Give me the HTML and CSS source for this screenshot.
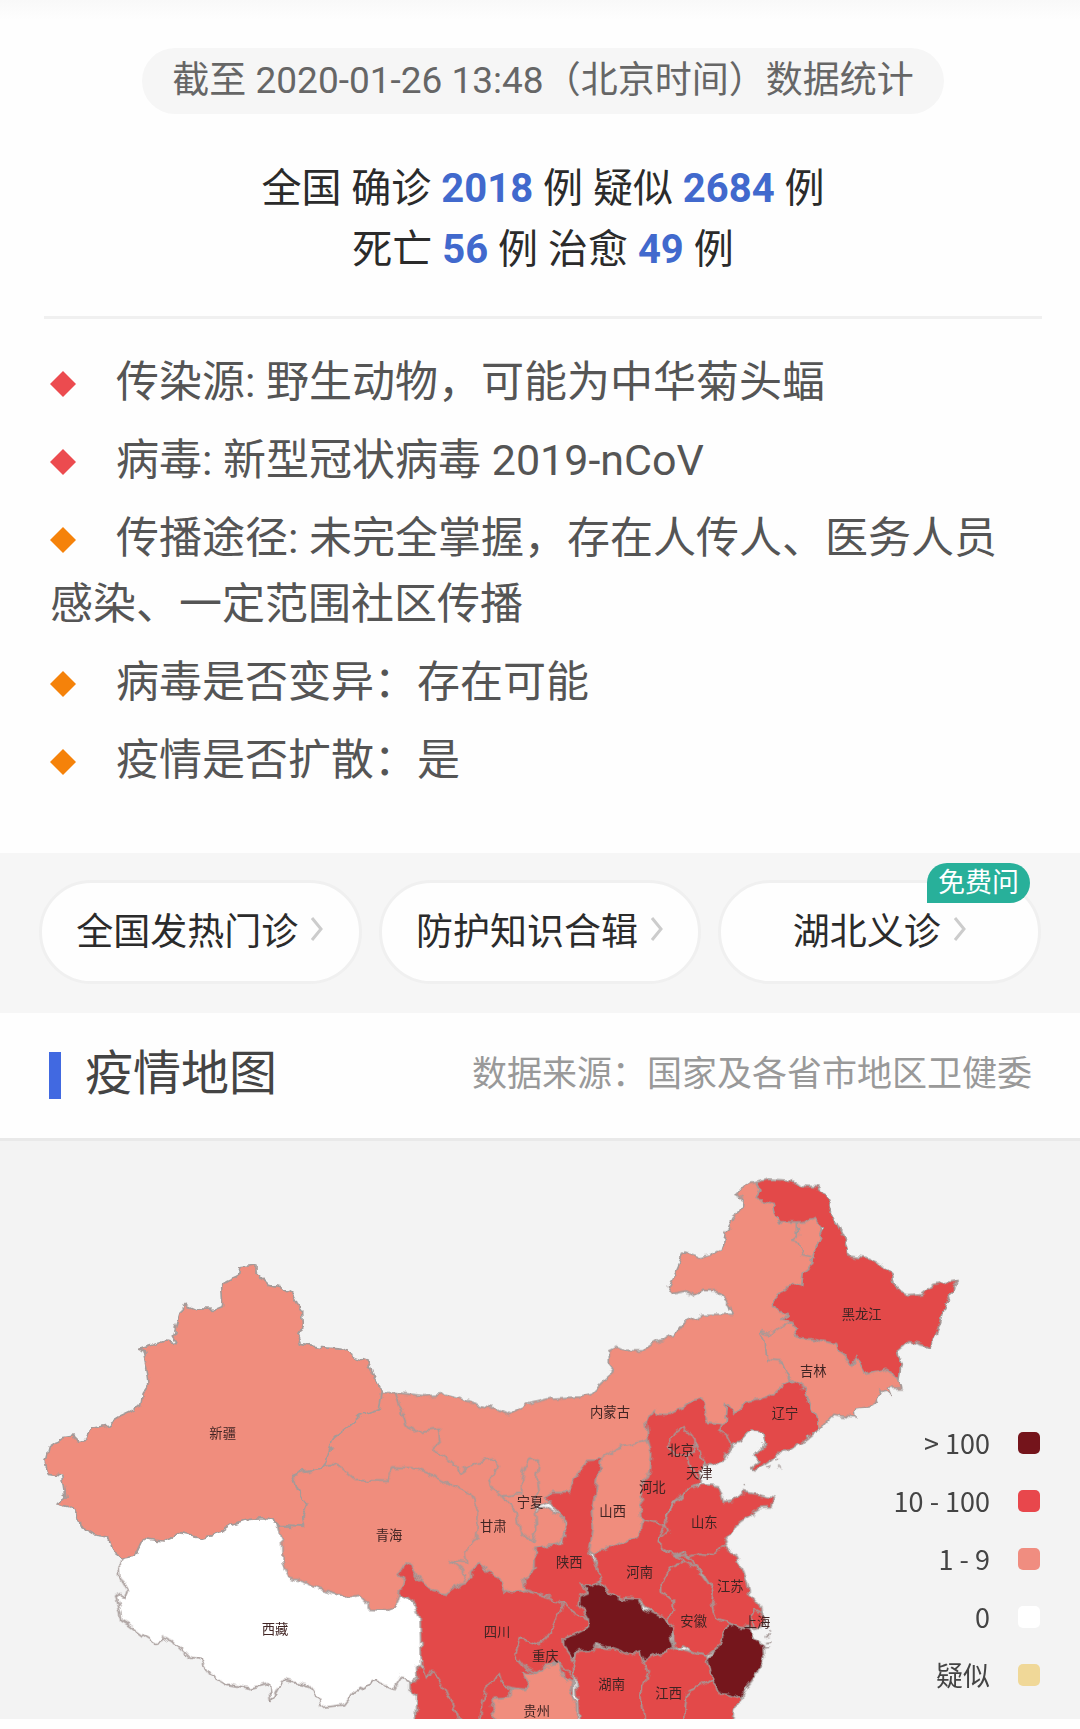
FILE: index.html
```
<!DOCTYPE html>
<html lang="zh-CN">
<head>
<meta charset="utf-8">
<meta name="viewport" content="width=device-width, initial-scale=1">
<title>疫情地图</title>
<link rel="stylesheet" href="styles.css">
</head>
<body>
<main>
  <section class="summary">
    <p class="stamp">截至 2020-01-26 13:48（北京时间）数据统计</p>
    <p class="stats">全国 确诊 <strong>2018</strong> 例 疑似 <strong>2684</strong> 例<br>死亡 <strong>56</strong> 例 治愈 <strong>49</strong> 例</p>
    <ul class="facts">
      <li class="fact fact-red">传染源: 野生动物，可能为中华菊头蝠</li>
      <li class="fact fact-red">病毒: 新型冠状病毒 2019-nCoV</li>
      <li class="fact">传播途径: 未完全掌握，存在人传人、医务人员感染、一定范围社区传播</li>
      <li class="fact">病毒是否变异：存在可能</li>
      <li class="fact">疫情是否扩散：是</li>
    </ul>
  </section>

  <nav class="links">
    <a class="pill" href="#clinics">全国发热门诊<svg class="chevron" viewBox="0 0 14 26" aria-hidden="true"><path d="M2 2l9 11-9 11"/></svg></a>
    <a class="pill" href="#guide">防护知识合辑<svg class="chevron" viewBox="0 0 14 26" aria-hidden="true"><path d="M2 2l9 11-9 11"/></svg></a>
    <a class="pill" href="#hubei">湖北义诊<svg class="chevron" viewBox="0 0 14 26" aria-hidden="true"><path d="M2 2l9 11-9 11"/></svg><span class="badge">免费问</span></a>
  </nav>

  <header class="heading">
    <h2 class="title">疫情地图</h2>
    <p class="source">数据来源：国家及各省市地区卫健委</p>
  </header>

  <section class="map">
    <svg class="china" viewBox="0 0 3240 1734" role="img" aria-label="全国疫情地图">
      <defs>
        <filter id="coast" filterUnits="userSpaceOnUse" x="0" y="0" width="3240" height="1740">
          <feTurbulence type="fractalNoise" baseFrequency="0.035" numOctaves="2" seed="4"/>
          <feDisplacementMap in="SourceGraphic" scale="26" xChannelSelector="R" yChannelSelector="G"/>
        </filter>
      </defs>
      <g class="regions" filter="url(#coast)">
        <!-- 西藏 -->
        <path class="none" transform="translate(60 300)" d="M345 900L310 952L300 965L302 1010L325 1050L315 1075L300 1055L287 1065L302 1110L305 1140L330 1155L370 1185L410 1210L425 1187L460 1200L510 1250L545 1260L570 1300L620 1330L690 1342L748 1328L755 1378L775 1340L795 1318L870 1335L895 1370L900 1400L970 1392L1000 1355L1065 1318L1120 1342L1145 1303L1175 1325L1210 1290L1220 1130L1140 1040L780 830L600 800Z"/>
        <!-- 内蒙古 -->
        <path class="low" transform="translate(1680 30)" d="M-495 725L-400 735L-340 730L-290 745L-240 765L-170 780L-150 790L-100 760L-30 742L60 738L90 730L125 695L162 662L145 640L145 600L170 588L210 600L245 600L290 570L345 550L375 512L410 500L430 490L520 490L510 460L470 420L425 418L405 432L380 420L340 428L325 405L345 370L375 303L420 318L450 312L490 290L495 250L520 200L550 175L552 145L525 130L555 100L600 92L680 120L780 200L800 400L720 600L680 720L500 900L200 920L100 1000L-100 1080L-400 1000Z"/>
        <!-- 甘肃 -->
        <path class="low" transform="translate(840 660)" d="M300 95L345 95L365 150L378 190L400 215L475 205L480 240L455 265L500 290L545 335L590 305L640 292L658 315L630 360L640 385L690 420L760 450L800 440L850 470L858 530L820 550L765 560L765 640L735 690L640 720L480 720L100 400L60 300Z"/>
        <!-- 宁夏 -->
        <path class="low" transform="translate(840 660)" d="M735 320L750 298L775 298L768 350L775 390L765 430L770 500L760 545L720 515L705 450L665 405L725 400L725 350Z"/>
        <!-- 青海 -->
        <path class="low" transform="translate(840 660)" d="M130 315L35 345L50 390L80 430L65 470L70 495L-5 490L8 540L10 610L30 650L75 665L120 685L200 705L235 700L265 730L265 748L325 750L350 735L360 700L420 720L530 690L560 640L510 600L560 605L555 575L590 530L595 450L570 400L510 370L440 335L400 320L335 318L320 358L225 355L190 325L160 310Z"/>
        <!-- 新疆 -->
        <path class="low" transform="translate(60 300)" d="M660 78L708 72L708 95L745 130L785 140L812 155L828 185L848 212L850 255L835 280L845 308L900 316L965 322L1010 350L1045 362L1060 400L1087 452L1078 505L1020 525L985 555L940 590L925 640L910 680L850 690L815 705L830 750L860 790L845 830L850 855L780 850L735 830L690 832L635 850L600 875L545 892L480 878L430 900L370 893L345 945L305 952L283 935L268 888L225 882L180 855L175 820L150 798L112 788L138 770L128 705L85 700L75 660L85 620L130 590L163 585L170 598L200 595L215 562L265 552L300 525L365 495L370 460L390 430L385 390L372 330L358 325L435 300L472 305L460 285L480 220L495 190L525 203L585 205L608 195L605 130L625 118L655 105Z"/>
        <g transform="translate(1680 30)">
          <!-- 吉林 -->
          <path class="low" d="M600 540L630 548L665 525L700 515L800 540L1000 640L1025 710L985 712L995 738L962 715L955 745L925 768L885 775L888 800L845 795L822 790L780 838L740 800L690 690L665 630L620 625L615 570Z"/>
          <!-- 黑龙江 -->
          <path class="mid" d="M590 95L625 85L690 88L730 105L770 108L800 135L815 180L832 220L855 270L865 315L920 322L965 340L998 370L1005 415L1040 432L1085 428L1120 400L1195 386L1178 405L1175 435L1155 460L1140 520L1120 560L1105 587L1050 572L1015 598L1027 640L1020 682L980 655L920 672L900 635L890 620L875 642L850 610L835 600L830 578L780 570L715 558L700 515L665 508L685 485L655 482L640 460L650 430L705 395L725 405L730 360L755 340L765 290L792 235L765 200L725 213L660 213L645 185L640 155L610 148L588 145L600 115Z"/>
          <path class="line" d="M715 215L715 255L698 270L718 275L725 310L755 318"/>
          <!-- 辽宁 -->
          <path class="mid" d="M690 688L735 715L750 760L770 800L775 835L730 870L690 900L655 905L620 935L580 962L575 950L600 930L580 915L620 875L612 845L575 838L545 870L510 885L490 860L470 830L495 810L500 755L525 790L560 755L620 740L650 720Z"/>
        </g>
        <g transform="translate(840 660)">
          <!-- 四川、云南 -->
          <path class="mid" d="M372 605L395 615L415 655L460 690L500 700L525 685L545 665L575 655L575 625L600 605L620 635L655 650L670 690L700 698L735 690L800 705L850 725L880 800L880 1000L860 1120L410 1120L410 1000L390 990L390 965L412 960L410 915L425 915L420 770L400 720L360 700L372 655L358 640Z"/>
          <path class="line" d="M430 915L440 955L455 925L500 990L545 1090M600 1090L605 1030L625 965L660 940L670 975L725 985"/>
          <!-- 重庆 -->
          <path class="mid" d="M850 725L900 745L930 780L920 815L885 830L885 890L880 950L830 900L770 935L735 920L705 880L725 835L780 850L820 800Z"/>
          <!-- 贵州 -->
          <path class="low" d="M725 930L770 940L790 915L835 905L850 950L880 960L870 1000L890 1030L890 1120L660 1120L635 1035L645 1015L690 1010L690 985L740 985L750 965Z"/>
        </g>
        <g transform="translate(1620 660)">
          <path class="mid" d="M350 470L470 500L500 590L450 650L390 640L340 560Z"/>
          <!-- 陕西 -->
          <path class="mid" d="M185 295L150 298L105 350L85 395L35 395L20 410L50 450L75 480L80 530L60 545L0 555L-15 560L-15 620L-50 655L-45 690L20 710L60 725L110 760L160 780L200 690L165 610L150 575L160 500L155 450L165 400L172 350Z"/>
          <!-- 山西 -->
          <path class="low" d="M185 295L230 260L320 235L350 280L340 500L300 520L250 545L160 580L148 570L160 500L155 450L165 400L170 350Z"/>
          <!-- 河北 -->
          <path class="mid" d="M345 145L350 160L385 160L420 145L450 120L485 112L495 145L500 180L540 185L535 205L560 225L572 250L550 290L520 312L490 310L480 330L480 365L440 385L400 420L380 465L375 490L305 475L298 440L310 410L300 380L330 330L335 280L325 240L318 180Z"/>
          <path class="line" d="M405 215L430 197L450 220L465 240L465 265L440 285L400 280L385 255L395 235ZM465 245L480 270L495 310M440 285L450 320L480 350"/>
          <!-- 河南 -->
          <path class="mid" d="M165 575L250 545L300 520L305 475L375 490L355 540L365 565L400 582L430 600L395 620L365 660L365 690L400 715L400 750L385 790L340 760L300 715L240 712L205 695L185 662L165 610Z"/>
          <!-- 安徽 -->
          <path class="mid" d="M430 600L470 620L490 650L520 690L515 730L530 775L570 790L545 830L530 860L500 885L460 875L430 855L405 862L400 820L385 770L400 750L400 715L365 690L365 660L395 620Z"/>
          <!-- 江苏 -->
          <path class="mid" d="M400 582L450 570L550 555L595 590L620 660L630 700L665 740L670 780L640 800L600 800L570 788L530 775L515 730L520 690L490 640L440 585Z"/>
          <!-- 山东 -->
          <path class="mid" d="M375 490L385 460L405 420L445 382L490 370L535 375L545 400L550 425L580 420L610 392L650 400L700 412L695 440L660 442L625 465L590 490L550 555L520 585L480 580L450 590L430 570L400 582L360 560L358 535L385 510Z"/>
          <!-- 上海 -->
          <path class="mid" d="M630 765L645 745L665 755L678 790L645 802Z"/>
          <!-- 湖南 -->
          <path class="mid" d="M110 870L155 855L300 865L325 930L305 1000L320 1120L120 1120L110 980L100 920Z"/>
          <!-- 江西 -->
          <path class="mid" d="M405 862L430 870L500 885L515 950L480 975L440 1000L430 1120L318 1120L305 1000L325 930L310 903L360 875Z"/>
          <!-- 福建 -->
          <path class="mid" d="M515 950L535 990L605 1012L580 1050L575 1120L430 1120L440 1000L480 975Z"/>
          <!-- 湖北 -->
          <path class="high" d="M120 668L150 670L185 662L205 695L240 712L300 715L310 745L370 770L400 795L395 830L405 862L360 875L310 903L300 870L270 880L215 860L165 848L155 868L110 870L97 895L75 865L72 830L105 820L145 800L145 775L118 730L120 705L145 695Z"/>
          <!-- 浙江 -->
          <path class="high" d="M570 788L600 800L630 805L640 830L668 850L672 890L655 930L635 960L615 985L605 1012L560 1000L535 998L515 950L500 900L530 860L550 820Z"/>
          <!-- 沿海岛屿 -->
          <path class="line" d="M670 825L690 822M672 842L692 840M668 858L690 856M690 808L696 812M675 320L692 314M705 296L718 292M718 314L722 318M612 370L616 376"/>
        </g>
      </g>
      <g class="names">
        <text x="668" y="890">新疆</text>
        <text x="825" y="1479">西藏</text>
        <text x="1167" y="1198">青海</text>
        <text x="1480" y="1170">甘肃</text>
        <text x="1590" y="1098">宁夏</text>
        <text x="1830" y="828">内蒙古</text>
        <text x="2585" y="533">黑龙江</text>
        <text x="2440" y="704">吉林</text>
        <text x="2355" y="831">辽宁</text>
        <text x="2042" y="942">北京</text>
        <text x="2098" y="1010">天津</text>
        <text x="1957" y="1053">河北</text>
        <text x="1838" y="1126">山西</text>
        <text x="2113" y="1158">山东</text>
        <text x="1708" y="1278">陕西</text>
        <text x="1919" y="1307">河南</text>
        <text x="2191" y="1350">江苏</text>
        <text x="2081" y="1454">安徽</text>
        <text x="2271" y="1458">上海</text>
        <text x="1491" y="1489">四川</text>
        <text x="1636" y="1560">重庆</text>
        <text x="1835" y="1643">湖南</text>
        <text x="2006" y="1670">江西</text>
        <text x="1610" y="1725">贵州</text>
      </g>
    </svg>
    <ul class="legend">
      <li class="level">&gt; 100<span class="swatch swatch-high"></span></li>
      <li class="level">10 - 100<span class="swatch swatch-mid"></span></li>
      <li class="level">1 - 9<span class="swatch swatch-low"></span></li>
      <li class="level">0<span class="swatch swatch-none"></span></li>
      <li class="level">疑似<span class="swatch swatch-suspect"></span></li>
    </ul>
  </section>
</main>
</body>
</html>
```
FILE: styles.css
```
* {
  box-sizing: border-box;
}

body {
  margin: 0;
  background: #fefefe;
  color: #333;
  font-family: Roboto, "Noto Sans CJK SC", sans-serif;
}

p, ul, h2 {
  margin: 0;
  padding: 0;
}

ul {
  list-style: none;
}

.summary {
  display: flex;
  flex-direction: column;
  padding: 48px 38px 60px 44px;
  background: linear-gradient(#f9f9f9, #fefefe 20px);
}

.stamp {
  align-self: center;
  padding: 0 30px;
  border-radius: 33px;
  background: #f6f6f6;
  color: #666;
  font-size: 37px;
  line-height: 66px;
}

.stats {
  padding: 44px 0 36px;
  border-bottom: 3px solid #f0f0f0;
  color: #2b2b2b;
  font-size: 40px;
  line-height: 61px;
  text-align: center;
}

.stats strong {
  color: #4169cd;
  font-weight: 700;
}

.facts {
  display: flex;
  flex-direction: column;
  gap: 12px;
  padding: 30px 30px 0 6px;
  color: #555;
  font-size: 43px;
  line-height: 66px;
}

.fact::before {
  content: "";
  display: inline-block;
  width: 26px;
  height: 26px;
  margin-right: 40px;
  background: #f5820a;
  clip-path: polygon(50% 0, 100% 50%, 50% 100%, 0 50%);
}

.fact-red::before {
  background: #ec4b4f;
}

.links {
  display: grid;
  grid-template-columns: repeat(3, 1fr);
  gap: 17px;
  padding: 27px 39px 29px;
  background: #f6f6f6;
}

.pill {
  position: relative;
  display: flex;
  align-items: center;
  justify-content: center;
  gap: 12px;
  height: 104px;
  padding-bottom: 6px;
  border: 3px solid #f0f0f0;
  border-radius: 52px;
  background: #fefefe;
  color: #2b2b2b;
  font-size: 37px;
  text-decoration: none;
}

.chevron {
  width: 14px;
  height: 26px;
  fill: none;
  stroke: #ccc;
  stroke-width: 3;
}

.badge {
  position: absolute;
  top: -20px;
  right: 8px;
  padding: 0 11px;
  border-radius: 20px 20px 20px 0;
  background: #28b09a;
  color: #fff;
  font-size: 27px;
  line-height: 40px;
}

.heading {
  display: flex;
  align-items: center;
  justify-content: space-between;
  height: 128px;
  padding: 0 48px 14px 49px;
  border-bottom: 3px solid #e9e9e9;
}

.title {
  display: flex;
  align-items: center;
  gap: 24px;
  color: #444;
  font-size: 48px;
  font-weight: 400;
}

.title::before {
  content: "";
  width: 12px;
  height: 47px;
  margin-top: 14px;
  background: #4169e1;
}

.source {
  padding-top: 4px;
  color: #999;
  font-size: 35px;
}

.map {
  position: relative;
  margin-bottom: 10px;
  background: #f3f3f3;
}

.china {
  display: block;
  width: 100%;
  height: auto;
}

.regions {
  stroke: #a59a98;
  stroke-width: 5;
  stroke-linejoin: round;
}

.none { fill: #fff; }
.low { fill: #f08d7d; }
.mid { fill: #e34949; }
.high { fill: #74141b; }
.line { fill: none; }

.names {
  fill: #402423;
  font-family: "Noto Sans CJK SC", sans-serif;
  font-size: 40px;
  text-anchor: middle;
}

.legend {
  position: absolute;
  right: 40px;
  bottom: 15px;
  color: #444;
  font-family: "Noto Sans CJK SC", sans-serif;
  font-size: 27px;
  line-height: 58px;
}

.level {
  display: flex;
  align-items: center;
  justify-content: flex-end;
  gap: 28px;
}

.swatch {
  width: 22px;
  height: 22px;
  border-radius: 5px;
}

.swatch-high { background: #74141b; }
.swatch-mid { background: #e8474c; }
.swatch-low { background: #f08d80; }
.swatch-none { background: #fff; }
.swatch-suspect { background: #f0d898; }
```
